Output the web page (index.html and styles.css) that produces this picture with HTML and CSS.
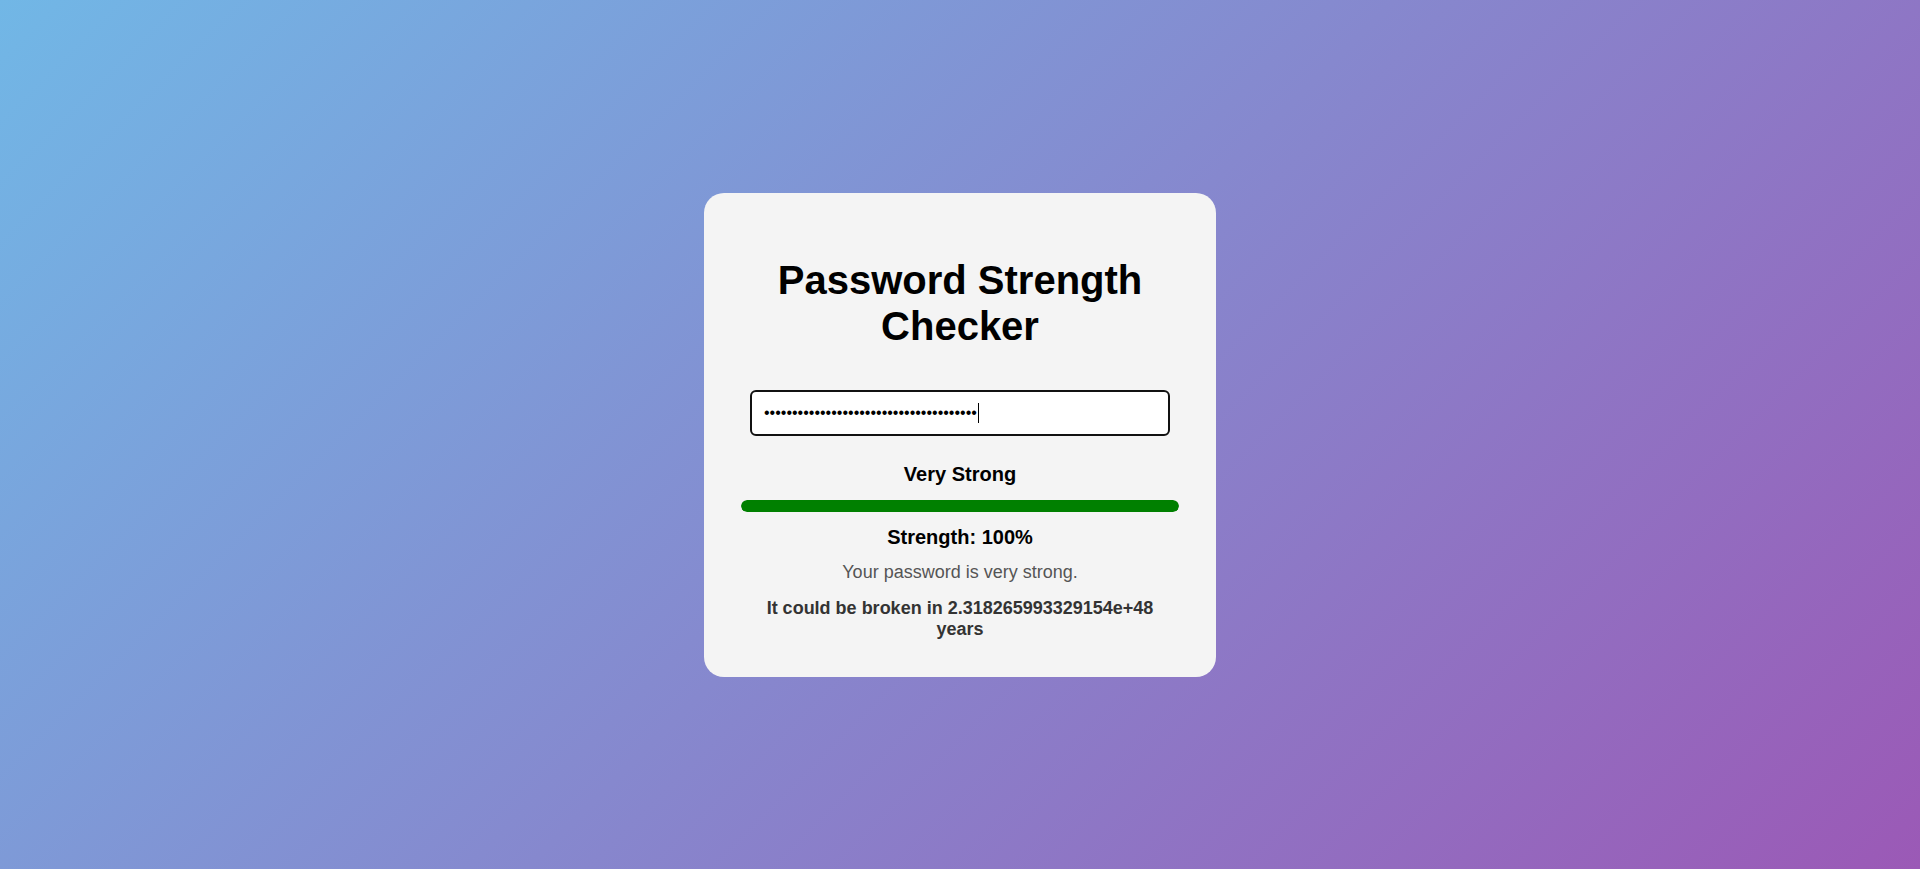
FILE: index.html
```html
<!DOCTYPE html>
<html lang="en">
<head>
<meta charset="utf-8">
<title>Password Strength Checker</title>
<link rel="stylesheet" href="styles.css">
</head>
<body>
  <main class="card">
    <h1 class="title">Password Strength Checker</h1>
    <div class="field">
      <input class="password" type="password" value="Tr0ub4dor&amp;3-Correct-Horse-Battery!!#$%">
      <span class="caret"></span>
    </div>
    <div class="level">Very Strong</div>
    <div class="meter"><div class="meter-fill" style="width: 100%"></div></div>
    <div class="score">Strength: 100%</div>
    <p class="message">Your password is very strong.</p>
    <p class="crack">It could be broken in 2.318265993329154e+48 years</p>
  </main>
</body>
</html>
```
FILE: styles.css
```css
html, body {
  margin: 0;
  height: 100%;
}

body {
  display: flex;
  align-items: center;
  justify-content: center;
  background: linear-gradient(135deg, #71b7e6, #9b59b6);
  font-family: "Liberation Sans", Arial, sans-serif;
}

.card {
  width: 512px;
  box-sizing: border-box;
  padding: 64px 37px 37px;
  background: #f4f4f4;
  border-radius: 20px;
  text-align: center;
}

.title {
  margin: 0 0 41px;
  font-size: 40px;
  line-height: 46px;
  font-weight: bold;
  color: #000;
}

.field {
  position: relative;
  width: 420px;
  margin: 0 auto;
}

.password {
  display: block;
  box-sizing: border-box;
  width: 420px;
  height: 46px;
  margin: 0;
  padding: 0 12px;
  border: 2px solid #111;
  border-radius: 6px;
  background: #fff;
  font-family: "Liberation Sans", Arial, sans-serif;
  font-size: 16px;
  color: #000;
  outline: none;
}

.caret {
  position: absolute;
  left: 228px;
  top: 13px;
  width: 1px;
  height: 20px;
  background: #000;
}

.level {
  margin: 27px 0 14px;
  font-size: 20px;
  line-height: 23px;
  font-weight: bold;
  color: #000;
}

.meter {
  height: 12px;
  border-radius: 6px;
  background: #ddd;
  overflow: hidden;
  margin-bottom: 14px;
}

.meter-fill {
  height: 100%;
  background: #008000;
  border-radius: 6px;
}

.score {
  margin: 0 0 13px;
  font-size: 20px;
  line-height: 23px;
  font-weight: bold;
  color: #000;
}

.message {
  margin: 0 0 15px;
  font-size: 18px;
  line-height: 21px;
  color: #555;
}

.crack {
  margin: 0;
  padding: 0 6px;
  font-size: 18px;
  line-height: 21px;
  font-weight: bold;
  color: #333;
}
```
